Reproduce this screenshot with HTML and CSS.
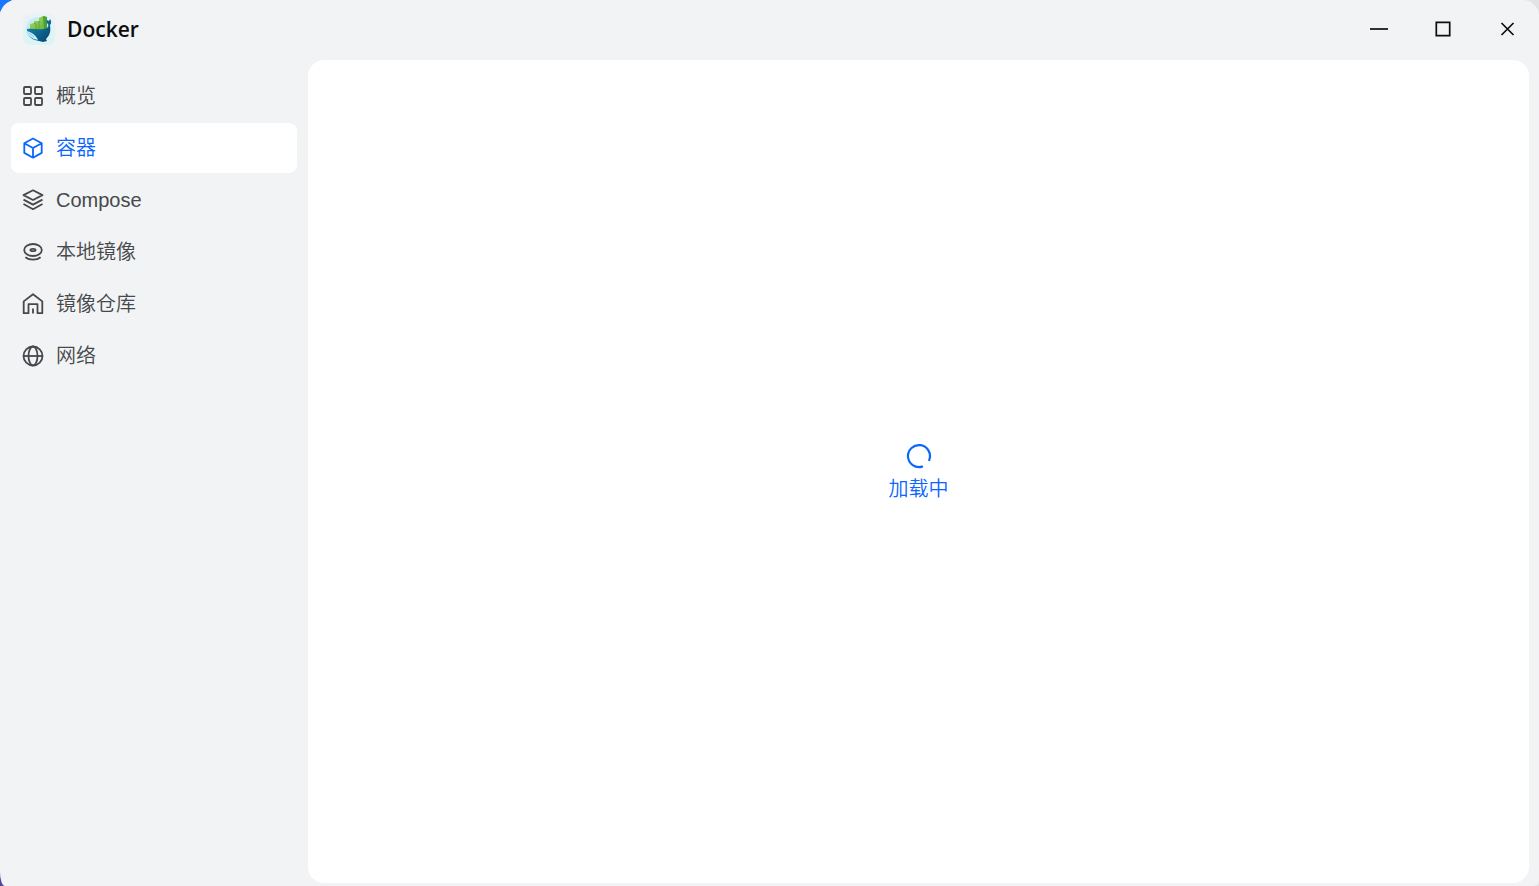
FILE: index.html
```html
<!DOCTYPE html>
<html lang="zh-CN">
<head>
    <meta charset="UTF-8">
    <meta name="viewport" content="width=device-width, initial-scale=1.0">
    <title>Docker</title>
    <link rel="stylesheet" href="styles.css">
</head>
<body>
    <div class="window">
        <header class="titlebar">
            <svg class="logo" viewBox="0 0 32 32" aria-hidden="true">
                <defs>
                    <linearGradient id="tile" x1="0" y1="0" x2="0" y2="1">
                        <stop offset="0" stop-color="#eaf2f8"/>
                        <stop offset="1" stop-color="#d9f6f3"/>
                    </linearGradient>
                    <linearGradient id="whale" x1="0" y1="0" x2="1" y2="1">
                        <stop offset="0" stop-color="#1791b2"/>
                        <stop offset="1" stop-color="#06416f"/>
                    </linearGradient>
                    <linearGradient id="leaf" x1="0" y1="0" x2="1" y2="1">
                        <stop offset="0" stop-color="#b4dc5a"/>
                        <stop offset="1" stop-color="#5fb13a"/>
                    </linearGradient>
                </defs>
                <rect width="32" height="32" rx="7" fill="url(#tile)"/>
                <circle cx="15" cy="16" r="12" fill="#c9ebf6"/>
                <path d="M7 17v-6l4-1V8h5V5l4-2 4 1v13z" fill="url(#leaf)"/>
                <path d="M20 3l4 1v13h-3z" fill="#46a33a"/>
                <path d="M11 10l2 1v5M16 8v8" fill="none" stroke="#57a83f"/>
                <path d="M4 16c6-1 13 2 20-1 1-1 2-2 1-4-2-1-2-3-1-4l2 1 1-2c2 3 1 5 0 6 1 6 0 10-4 14l1 2-4 1-4-1-4-1C7 25 4 21 4 16z" fill="url(#whale)"/>
                <path d="M4 18c4 1 9 4 11 9-6-1-10-4-11-9z" fill="#cdeeff"/>
                <path d="M6 20l5 4" stroke="#84c2de"/>
            </svg>
            <h1 class="title">Docker</h1>
            <div class="controls">
                <button type="button" class="control" aria-label="最小化">
                    <svg viewBox="0 0 20 20"><path d="M1 10h18"/></svg>
                </button>
                <button type="button" class="control" aria-label="最大化">
                    <svg viewBox="0 0 20 20"><path d="M3.3 3.3h13.4v13.4H3.3z"/></svg>
                </button>
                <button type="button" class="control" aria-label="关闭">
                    <svg viewBox="0 0 20 20"><path d="M4.5 4l12 12M16.5 4l-12 12"/></svg>
                </button>
            </div>
        </header>

        <div class="body">
            <nav class="sidebar">
                <a class="item" href="#overview">
                    <svg class="icon" viewBox="0 0 22 22"><rect x="2" y="2" width="7" height="7" rx="1"/><rect x="13" y="2" width="7" height="7" rx="1"/><rect x="2" y="13" width="7" height="7" rx="1"/><rect x="13" y="13" width="7" height="7" rx="1"/></svg>
                    <span>概览</span>
                </a>
                <a class="item active" href="#containers" aria-current="page">
                    <svg class="icon" viewBox="0 0 22 22"><path d="M11 1.5l8.7 4.8v9.6L11 20.7l-8.7-4.8V6.3zM2.3 6.3L11 11l8.7-4.7M11 11v9.7"/></svg>
                    <span>容器</span>
                </a>
                <a class="item" href="#compose">
                    <svg class="icon" viewBox="0 0 22 22"><path d="M11 1.3l9.5 4.8L11 11 1.5 6.1zM1.5 10.6L11 15.6l9.5-5M1.5 15l9.5 5.2 9.5-5.2"/></svg>
                    <span>Compose</span>
                </a>
                <a class="item" href="#images">
                    <svg class="icon" viewBox="0 0 22 22"><ellipse cx="11" cy="9" rx="8.8" ry="6"/><ellipse cx="11" cy="9" rx="2.6" ry="1.2"/><path d="M3.4 16.3c3.8 3.2 11.4 3.2 15.2 0"/></svg>
                    <span>本地镜像</span>
                </a>
                <a class="item" href="#registry">
                    <svg class="icon" viewBox="0 0 22 22"><path d="M1.7 20.2V8.4L11 1.2l9.3 7.2v11.8h-4.8v-9h-9v9zM11 20.6v-5"/></svg>
                    <span>镜像仓库</span>
                </a>
                <a class="item" href="#network">
                    <svg class="icon" viewBox="0 0 22 22"><circle cx="11" cy="11" r="9.5"/><ellipse cx="11" cy="11" rx="4.5" ry="9.5"/><path d="M1.5 11h19"/></svg>
                    <span>网络</span>
                </a>
            </nav>

            <main class="content">
                <div class="loading" role="status">
                    <svg class="spinner" viewBox="0 0 26 26"><path d="M23.2 17.1A11 11 0 1 0 16.1 23.6"/></svg>
                    <span>加载中</span>
                </div>
            </main>
        </div>
    </div>
</body>
</html>
```
FILE: styles.css
```css
* {
    box-sizing: border-box;
}
body {
    margin: 0;
    font-family: "Liberation Sans", "Noto Sans CJK SC", sans-serif;
    font-size: 20px;
    font-weight: 350;
    line-height: 24px;
    color: #46484b;
    /* desktop showing behind the window corners */
    background:
        radial-gradient(circle at 0 0, #1b75ff 11px, transparent 12px),
        linear-gradient(#f3e6f5, #f3e6f5) top left / 50% 50% no-repeat,
        linear-gradient(#54459b, #54459b) bottom left / 50% 50% no-repeat,
        #e2e3e5;
}
.window {
    display: flex;
    flex-direction: column;
    min-height: 100vh;
    background-color: #f1f3f5;
    border-radius: 16px 16px 5px 5px / 16px 16px 5px 14px;
}
.titlebar {
    display: flex;
    align-items: center;
    height: 60px;
    padding: 0 0 2px 23px;
}
.logo {
    width: 32px;
    height: 32px;
}
.title {
    margin: 0 0 0 12px;
    font-family: "Open Sans", "Noto Sans", sans-serif;
    font-size: 21px;
    font-weight: 600;
    line-height: 28px;
    color: #0c0d0e;
}
.controls {
    display: flex;
    margin-left: auto;
}
.control {
    display: flex;
    align-items: center;
    justify-content: center;
    width: 64px;
    height: 58px;
    padding: 0;
    border: none;
    background: none;
    cursor: pointer;
}
.control svg {
    width: 20px;
    height: 20px;
    fill: none;
    stroke: #0c0d0e;
    stroke-width: 1.7;
}
.body {
    display: flex;
    flex: 1;
    padding: 0 10px 3px 0;
}
.sidebar {
    display: flex;
    flex-direction: column;
    gap: 2px;
    width: 308px;
    padding: 11px;
}
.item {
    display: flex;
    align-items: center;
    gap: 12px;
    height: 50px;
    padding: 0 11px;
    border-radius: 8px;
    color: inherit;
    text-decoration: none;
}
.item.active {
    background-color: #fff;
    color: #0a66ff;
}
.icon {
    width: 22px;
    height: 22px;
    fill: none;
    stroke: currentColor;
    stroke-width: 1.8;
    stroke-linejoin: round;
}
.content {
    display: flex;
    flex: 1;
    align-items: center;
    justify-content: center;
    background-color: #fff;
    border-radius: 16px;
}
.loading {
    display: flex;
    flex-direction: column;
    align-items: center;
    gap: 8px;
    color: #0a66ff;
}
.spinner {
    width: 26px;
    height: 26px;
    fill: none;
    stroke: currentColor;
    stroke-width: 2.2;
    stroke-linecap: round;
}
```
